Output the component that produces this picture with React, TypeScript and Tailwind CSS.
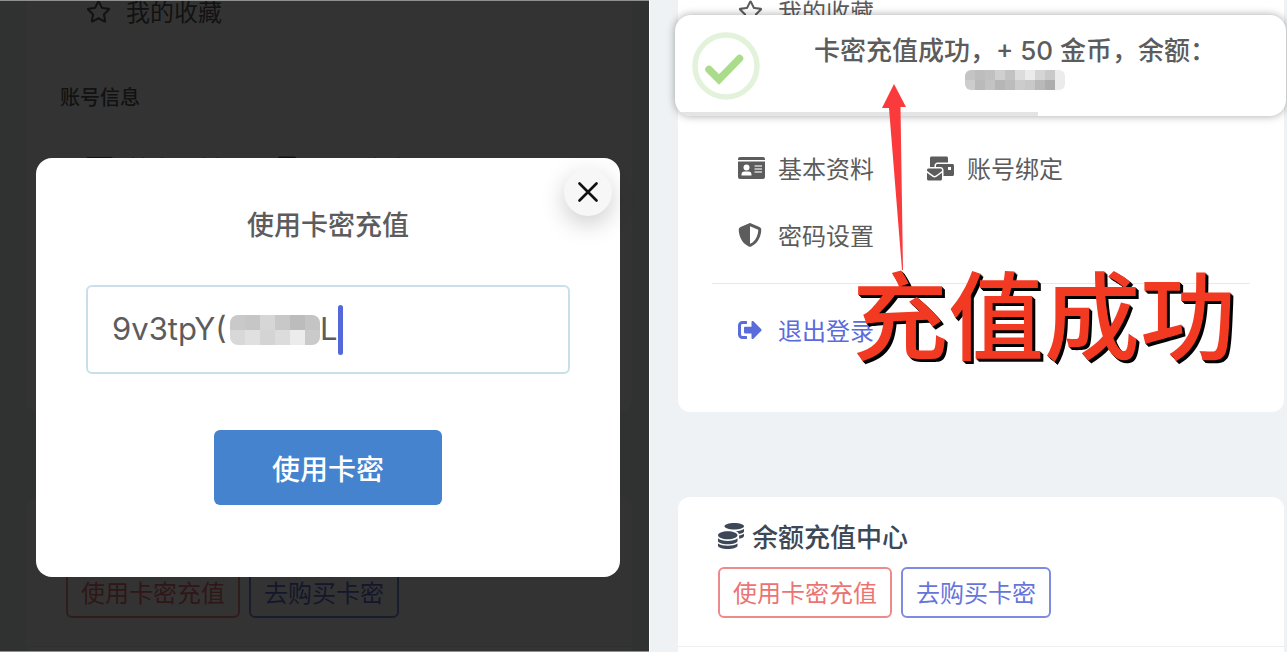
import { useState, type ReactNode } from "react";
import { clsx } from "clsx";
import { FaCoins, FaMailBulk, FaRegStar, FaSignOutAlt } from "react-icons/fa";
import { FaShieldHalved } from "react-icons/fa6";

type MosaicProps = {
  rows: string[][];
  cell: number;
  className?: string;
};

type AccountLinkProps = {
  icon: ReactNode;
  label: string;
  className?: string;
};

const CODE_MOSAIC = [
  ["#c9c9c9", "#c6c6c6", "#d6d6d6", "#c8c8c8", "#bcbcbc", "#c4c4c4"],
  ["#d8d8d8", "#e0e0e0", "#d4d4d4", "#dcdcdc", "#ececec", "#cacaca"],
];

const BALANCE_MOSAIC = [
  ["#c4c4c4", "#bdbdbd", "#c0c0c0", "#cfcfcf", "#c2c2c2", "#dcdcdc", "#ebebeb", "#d5d5d5", "#c9c9c9", "#ececec"],
  ["#cdcdcd", "#bababa", "#c3c3c3", "#b6b6b6", "#bcbcbc", "#cccccc", "#c8c8c8", "#b9b9b9", "#adadad", "#ebebeb"],
];

function Mosaic({ rows, cell, className }: MosaicProps) {
  return (
    <svg
      aria-hidden="true"
      width={rows[0].length * cell}
      height={rows.length * cell}
      className={clsx("shrink-0", className)}
    >
      {rows.map((row, y) =>
        row.map((fill, x) => (
          <rect
            key={`${x}-${y}`}
            x={x * cell}
            y={y * cell}
            width={cell}
            height={cell}
            fill={fill}
          />
        )),
      )}
    </svg>
  );
}

function IdCardIcon() {
  return (
    <svg
      width="27"
      height="22"
      viewBox="0 0 27 22"
      fill="currentColor"
      aria-hidden="true"
    >
      <path d="M2 0H25A2 2 0 0 1 27 2V3H0V2A2 2 0 0 1 2 0Z" />
      <path
        fillRule="evenodd"
        d="M0 4.5H27V20A2 2 0 0 1 25 22H2A2 2 0 0 1 0 20ZM8.5 7.5A3 3 0 1 0 8.500 13.500A3 3 0 1 0 8.500 7.500ZM3.500 18.500H13.500V17.500A3 3 0 0 0 10.500 14.500H6.500A3 3 0 0 0 3.500 17.500Z"
      />
      <path
        d="M16.500 9H24M16.500 12H24M16.500 15H24"
        stroke="#d4d4d4"
        strokeWidth="1.3"
      />
    </svg>
  );
}

function AccountLink({ icon, label, className }: AccountLinkProps) {
  return (
    <a
      href="#"
      className={clsx(
        "flex items-center whitespace-nowrap text-2xl leading-7",
        className ?? "text-[#5c5c5c]",
      )}
    >
      <span className="flex w-10 shrink-0 items-center">{icon}</span>
      {label}
    </a>
  );
}

function AccountPage() {
  return (
    <div className="flex min-h-screen flex-col">
      <section className="rounded-b-xl bg-white px-[34px] pb-[68px]">
        <div className="flex h-[22px] items-center pl-[26px]">
          <AccountLink icon={<FaRegStar size={25} />} label="我的收藏" />
        </div>
        <h2 className="mt-[61px] text-xl leading-7 font-medium text-[#5c5c5c]">
          账号信息
        </h2>
        <nav className="mt-[43px] grid grid-cols-[149px_1fr] gap-x-10 gap-y-[39px] pl-[26px]">
          <AccountLink icon={<IdCardIcon />} label="基本资料" />
          <AccountLink icon={<FaMailBulk size={27} />} label="账号绑定" />
          <AccountLink icon={<FaShieldHalved size={24} />} label="密码设置" />
        </nav>
        <hr className="mt-[34px] border-[#e6e8ea]" />
        <div className="mt-8 pl-[26px]">
          <AccountLink
            icon={<FaSignOutAlt size={24} />}
            label="退出登录"
            className="text-[#5a6bdc]"
          />
        </div>
      </section>

      <section className="mt-[85px] flex-1 rounded-t-xl bg-white pt-6">
        <h2 className="flex items-center gap-2 pl-10 text-[26px] leading-[30px] font-medium text-[#3c4858]">
          <FaCoins size={26} />
          余额充值中心
        </h2>
        <div className="mt-4 flex gap-[9px] pl-10">
          <button
            type="button"
            className="rounded-md border-2 border-[#ee8a8a] px-[13px] pt-2 pb-[10px] text-2xl leading-[29px] whitespace-nowrap text-[#ec7373]"
          >
            使用卡密充值
          </button>
          <button
            type="button"
            className="rounded-md border-2 border-[#7f8be0] px-[13px] pt-2 pb-[10px] text-2xl leading-[29px] whitespace-nowrap text-[#6674db]"
          >
            去购买卡密
          </button>
        </div>
        <hr className="mt-7 border-[#eceef0]" />
      </section>
    </div>
  );
}

function RechargeDialog() {
  const [code, setCode] = useState("9v3tpY(");

  return (
    <div
      role="dialog"
      aria-label="使用卡密充值"
      className="relative flex w-full flex-col items-center rounded-2xl bg-white px-[50px] pt-12 pb-[72px]"
    >
      <button
        type="button"
        aria-label="关闭"
        className="absolute top-2.5 right-2 flex size-12 items-center justify-center rounded-full bg-[#f7f7f7] shadow-[0_8px_24px_rgba(0,0,0,0.2)]"
      >
        <svg width="20" height="20" viewBox="0 0 20 20" aria-hidden="true">
          <path
            d="M1.5 1.5 18.5 18.5M18.5 1.5 1.5 18.5"
            stroke="#111"
            strokeWidth="2.6"
            strokeLinecap="round"
          />
        </svg>
      </button>
      <h1 className="text-[27px] leading-9 font-medium text-[#5c5c5c]">
        使用卡密充值
      </h1>
      <label className="mt-[43px] flex h-[89px] w-full items-center rounded-md border-2 border-[#c9dfe9] pl-6 text-[31px] text-[#5c5c5c]">
        <input
          type="text"
          aria-label="卡密"
          value={code}
          onChange={(event) => setCode(event.target.value)}
          className="w-[118px] font-['Inter','Noto_Sans_CJK_SC',sans-serif] outline-none"
        />
        <Mosaic rows={CODE_MOSAIC} cell={15} className="rounded-lg" />
        <span className="font-['Inter',sans-serif]">L</span>
        <span className="h-[50px] w-[5px] rounded-full bg-[#5468dc]" />
      </label>
      <button
        type="button"
        className="mt-14 h-[75px] w-[228px] rounded-md bg-[#4583cf] text-[28px] font-medium text-white"
      >
        使用卡密
      </button>
    </div>
  );
}

function SuccessToast() {
  return (
    <div
      role="status"
      className="absolute top-[15px] right-px left-[25px] overflow-hidden rounded-2xl bg-white shadow-[0_0_8px_rgba(0,0,0,0.35)]"
    >
      <div className="flex h-[101px] items-start pt-[17px] pr-4 pl-[17px]">
        <svg
          width="68"
          height="68"
          viewBox="0 0 68 68"
          fill="none"
          aria-hidden="true"
          className="shrink-0"
        >
          <circle cx="34" cy="34" r="31" stroke="#e3f2da" strokeWidth="5.5" />
          <path
            d="M17 37.5 27 47.5 47.5 26.5"
            stroke="#abdc8b"
            strokeWidth="7.5"
            strokeLinecap="round"
          />
        </svg>
        <div className="flex flex-1 flex-col items-center pt-1 text-[26px] leading-[30px] font-medium text-[#5c5c5c]">
          <p className="font-['Inter','Noto_Sans_CJK_SC',sans-serif] whitespace-nowrap">
            卡密充值成功，+ 50 金币，余额：
          </p>
          <Mosaic rows={BALANCE_MOSAIC} cell={10} className="mt-1 rounded-md" />
        </div>
      </div>
      <div className="absolute bottom-0 left-0 h-1 w-[363px] bg-[#e4e4e4]" />
    </div>
  );
}

function SuccessNote() {
  return (
    <>
      <svg
        width="26"
        height="186"
        viewBox="0 0 26 186"
        aria-hidden="true"
        className="absolute top-[84px] left-[231px]"
      >
        <path d="M13 0 25 23 19.5 23 22 186 21 186 8 24 1 24Z" fill="#fb3a3c" />
      </svg>
      <strong className="absolute top-[263px] left-[202px] text-[96px] leading-[96px] font-medium whitespace-nowrap text-[#f23a22] [text-shadow:1px_1px_0_#000,2px_2px_0_#000,3px_3px_0_#000]">
        充值成功
      </strong>
    </>
  );
}

export default function App() {
  return (
    <main className="grid min-h-screen grid-cols-[650fr_637fr] bg-[#eef2f4] font-['Noto_Sans_CJK_SC',sans-serif]">
      <div className="relative overflow-hidden border-r border-white pr-[17px] pl-[26px]">
        <AccountPage />
        <div className="absolute inset-0 flex items-center border-y border-[#8f9190] bg-black/80 pt-[83px] pr-[29px] pl-9">
          <RechargeDialog />
        </div>
      </div>
      <div className="relative overflow-hidden pr-[3px] pl-7">
        <AccountPage />
        <SuccessToast />
        <SuccessNote />
      </div>
    </main>
  );
}
